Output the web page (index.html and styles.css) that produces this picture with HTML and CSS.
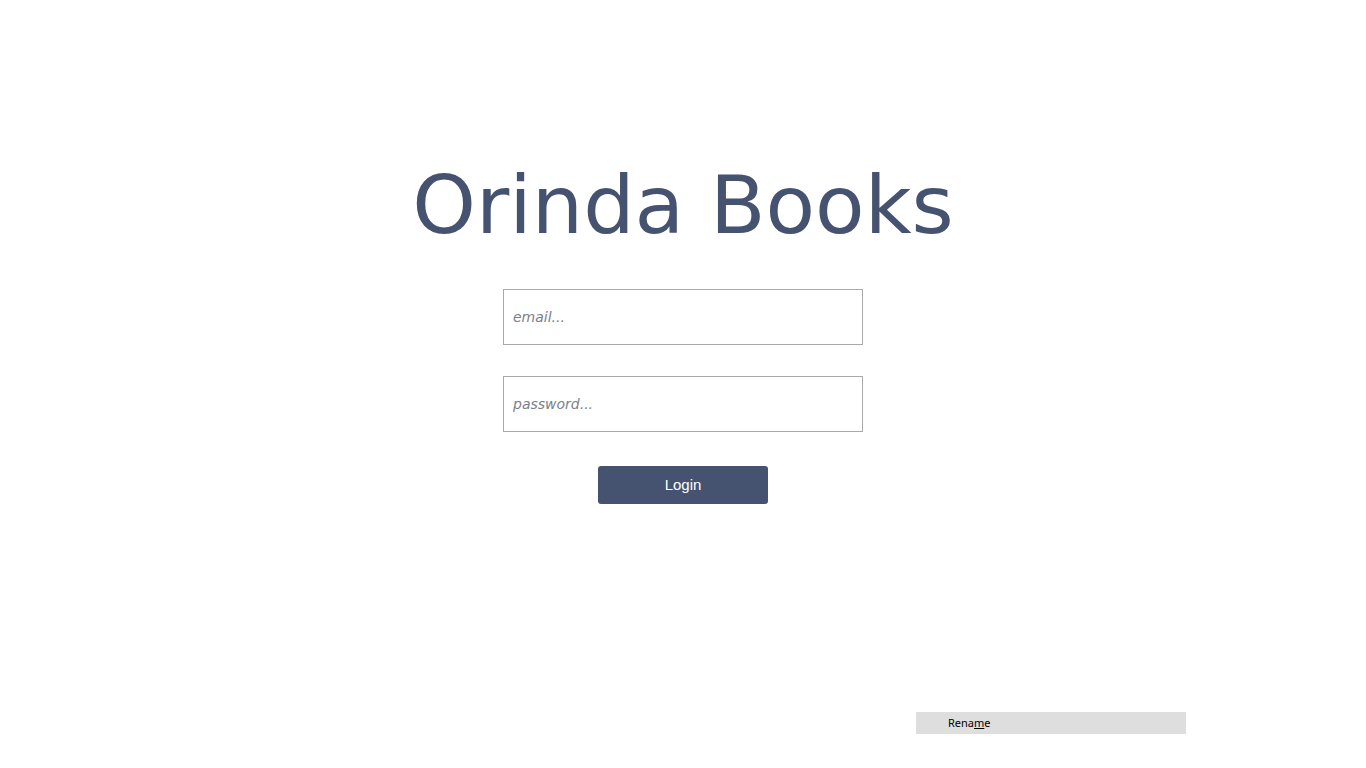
FILE: index.html
```html
<!DOCTYPE html>
<html>
<head>
<meta charset="utf-8">
<link rel="stylesheet" href="styles.css">
</head>
<body>
<main class="page">
  <h1 class="title">Orinda Books</h1>
  <form class="login">
    <input class="field" type="text" placeholder="email...">
    <input class="field" type="password" placeholder="password...">
    <button class="btn" type="button">Login</button>
  </form>
</main>
<div class="menu-item">Rena<u>m</u>e</div>
</body>
</html>
```
FILE: styles.css
```css
html, body {
  margin: 0;
  padding: 0;
  background: #fff;
}
body {
  width: 1366px;
  height: 768px;
  position: relative;
  overflow: hidden;
}
.page {
  display: flex;
  flex-direction: column;
  align-items: center;
  padding-top: 150px;
}
.title {
  margin: 0;
  font-family: "DejaVu Sans", sans-serif;
  font-weight: normal;
  font-size: 81px;
  line-height: 110px;
  color: #465370;
}
.login {
  display: flex;
  flex-direction: column;
  align-items: center;
  margin-top: 29px;
}
.field {
  box-sizing: border-box;
  width: 360px;
  height: 56px;
  border: 1px solid #a9a9a9;
  padding: 0 9px;
  margin: 0 0 31px 0;
  font-family: "DejaVu Sans", sans-serif;
  font-size: 14px;
  outline: none;
}
.field::placeholder {
  font-style: italic;
  color: #7b7f88;
}
.btn {
  margin-top: 3px;
  width: 170px;
  height: 38px;
  padding: 0 0 2px 0;
  border: none;
  border-radius: 3px;
  background: #465370;
  color: #fff;
  font-family: "Liberation Sans", Arial, sans-serif;
  font-size: 15px;
}
.menu-item {
  position: absolute;
  left: 916px;
  top: 712px;
  width: 270px;
  height: 22px;
  background: #dedede;
  box-sizing: border-box;
  padding-left: 32px;
  font-family: "Noto Sans", "Liberation Sans", sans-serif;
  font-size: 11px;
  line-height: 22px;
  color: #000;
}
```
